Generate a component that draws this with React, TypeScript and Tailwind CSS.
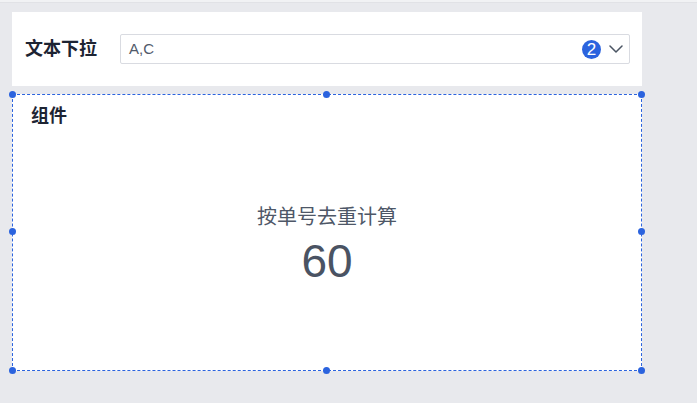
import React from "react";

const font = { fontFamily: '"Liberation Sans", "Noto Sans CJK SC", sans-serif' };

const Handle = ({ className }: { className: string }) => (
  <span className={`absolute w-[7px] h-[7px] rounded-full bg-[#2b63de] ${className}`} />
);

const App = () => {
  return (
    <div className="w-[697px] h-[403px] bg-[#e8e9ed] overflow-hidden" style={font}>
      {/* top strip */}
      <div className="h-[3px] bg-[#f1f2f4] border-b border-[#e1e2e6]" />

      <div className="pt-[9px] pl-3">
        {/* FILTER CARD */}
        <div className="w-[630px] h-[74px] bg-white flex items-center pl-[13px] pr-[12px]">
          <span className="w-[95px] text-[18px] font-bold text-[#1d2433]">文本下拉</span>
          <div className="flex-1 h-[30px] border border-[#d9dbe1] rounded-[2px] flex items-center pl-2 pr-[6px]">
            <span className="flex-1 text-[15px] text-[#515a6a]">A,C</span>
            <span className="w-[19px] h-[19px] rounded-full bg-[#2b63de] text-white text-[17px] font-medium flex items-center justify-center leading-none">
              2
            </span>
            <svg className="ml-[8px]" width="14" height="8" viewBox="0 0 14 8" fill="none">
              <path d="M1 1l6 6 6-6" stroke="#4b5563" strokeWidth="1.5" strokeLinecap="round" strokeLinejoin="round" />
            </svg>
          </div>
        </div>

        {/* COMPONENT BOX */}
        <div className="relative mt-2 w-[630px] h-[277px] bg-white border border-dashed border-[#2b63de]">
          <Handle className="-left-[4px] -top-[4px]" />
          <Handle className="left-[310px] -top-[4px]" />
          <Handle className="-right-[4px] -top-[4px]" />
          <Handle className="-left-[4px] top-[133px]" />
          <Handle className="-right-[4px] top-[133px]" />
          <Handle className="-left-[4px] -bottom-[4px]" />
          <Handle className="left-[310px] -bottom-[4px]" />
          <Handle className="-right-[4px] -bottom-[4px]" />

          <div className="pt-[9px] pl-[18px] text-[18px] leading-[24px] font-bold text-[#1d2433]">组件</div>
          <div className="mt-[75px] flex flex-col items-center">
            <span className="text-[20px] leading-[28px] text-[#4e5767]">按单号去重计算</span>
            <span className="mt-[4px] text-[46px] leading-[52px] text-[#4a5363]">60</span>
          </div>
        </div>
      </div>
    </div>
  );
};

export default App;
